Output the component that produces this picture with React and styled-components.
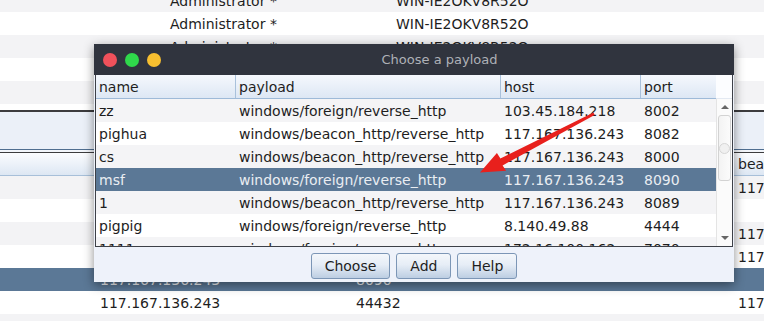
import styled, { createGlobalStyle } from "styled-components";

const GlobalStyle = createGlobalStyle`
  body {
    margin: 0;
    font-family: "DejaVu Sans", "Liberation Sans", sans-serif;
    font-size: 14px;
    color: #1e1e1e;
  }
`;

const Page = styled.div`
  position: relative;
  width: 764px;
  height: 321px;
  overflow: hidden;
  background: #ffffff;
`;

const SessionTable = styled.div`
  height: 121px;
  margin-top: -11px;
  overflow: hidden;
  border-bottom: 2px solid #3c3c3e;
`;

const SessionRow = styled.div`
  display: grid;
  grid-template-columns: 166px 226px 1fr;
  height: 23px;
  align-items: center;
  background: ${(p) => (p.$alt ? "#f3f3f5" : "#ffffff")};
`;

const Cell = styled.div`
  padding-left: 4px;
  white-space: nowrap;
  overflow: hidden;
  color: ${(p) => (p.$light ? "#f2f4f7" : "#1e1e1e")};
`;

const TabStrip = styled.div`
  height: 37px;
  background: #ebf0f8;
  border-bottom: 1px solid #4f6e90;
`;

const StripGap = styled.div`
  height: 2px;
  background: #f2f5fa;
  border-bottom: 1px solid #3c3c3e;
`;

const ListenerHeader = styled.div`
  display: grid;
  grid-template-columns: 96px 256px 382px 1fr;
  height: 22px;
  align-items: center;
  background: linear-gradient(#fbfcfe, #dde7f3);
  border-bottom: 1px solid #a7bfd9;
`;

const ListenerRow = styled.div`
  display: grid;
  grid-template-columns: 96px 256px 382px 1fr;
  height: 23px;
  align-items: center;
  background: ${(p) => (p.$selected ? "#5b7896" : p.$alt ? "#f3f3f5" : "#ffffff")};
`;

const Dialog = styled.div`
  position: absolute;
  left: 94px;
  top: 44px;
  width: 640px;
  height: 238px;
  display: flex;
  flex-direction: column;
  background: #eef2fa;
  box-shadow: 0 3px 10px rgba(0, 0, 0, 0.45);
`;

const TitleBar = styled.div`
  height: 31px;
  flex: none;
  display: flex;
  align-items: center;
  padding-left: 9px;
  background: #30343e;
`;

const Lights = styled.div`
  display: flex;
  gap: 8px;
`;

const Light = styled.span`
  width: 14px;
  height: 14px;
  border-radius: 50%;
  background: ${(p) => p.$color};
`;

const Title = styled.div`
  flex: 1;
  text-align: center;
  padding-right: 16px;
  font-size: 13px;
  color: #aeb1b7;
`;

const ScrollPane = styled.div`
  margin: 0 1px;
  border: 1px solid #3d4047;
  border-top: none;
  display: grid;
  grid-template-columns: 620px 16px;
  grid-template-rows: 24px 147px;
  background: #ffffff;
`;

const PayloadHeader = styled.div`
  display: grid;
  grid-template-columns: 140px 265px 140px 75px;
  background: linear-gradient(#f5f8fd, #dde7f4);
  border-bottom: 1px solid #9ebad8;
`;

const HeaderCell = styled.div`
  display: flex;
  align-items: center;
  padding-left: 3px;
  border-right: ${(p) => (p.$last ? "none" : "1px solid #a9c1db")};
  color: #1e1e1e;
`;

const Corner = styled.div`
  background: #fcfdff;
  border-bottom: 1px solid #e3e9f2;
`;

const Viewport = styled.div`
  overflow: hidden;
`;

const PayloadRow = styled.div`
  display: grid;
  grid-template-columns: 140px 265px 140px 75px;
  height: 23px;
  align-items: center;
  background: ${(p) => (p.$selected ? "#5b7896" : p.$alt ? "#f4f4f6" : "#ffffff")};
`;

const PayloadCell = styled.div`
  padding-left: 3px;
  white-space: nowrap;
  color: ${(p) => (p.$light ? "#e9edf2" : "#1e1e1e")};
`;

const ScrollBar = styled.div`
  display: flex;
  flex-direction: column;
  background: #fbfbfb;
  border-left: 1px solid #e4e4e4;
`;

const ScrollButton = styled.div`
  height: 16px;
  flex: none;
  display: flex;
  align-items: center;
  justify-content: center;
`;

const ArrowGlyph = styled.span`
  width: 0;
  height: 0;
  border-left: 4px solid transparent;
  border-right: 4px solid transparent;
  ${(p) =>
    p.$down
      ? "border-top: 4px solid #666;"
      : "border-bottom: 4px solid #666;"}
`;

const Track = styled.div`
  flex: 1;
  padding: 0 1px;
`;

const Thumb = styled.div`
  height: 64px;
  border: 1px solid #d3d3d3;
  border-radius: 3px;
  background: linear-gradient(90deg, #f3f3f3, #fbfbfb);
  display: flex;
  align-items: center;
  justify-content: center;
`;

const Grip = styled.span`
  width: 9px;
  height: 9px;
  border-radius: 50%;
  border: 1px solid #d6d6d6;
  background: #f0f0f0;
`;

const ButtonBar = styled.div`
  flex: 1;
  display: flex;
  justify-content: center;
  align-items: flex-start;
  gap: 6px;
  padding-top: 6px;
`;

const Button = styled.button`
  height: 26px;
  padding: 0 13px;
  font-family: "DejaVu Sans", "Liberation Sans", sans-serif;
  font-size: 14px;
  color: #1e1e1e;
  border: 1px solid #7c96b6;
  border-radius: 3px;
  background: linear-gradient(#f4f7fb 0%, #e6edf6 45%, #bdcee2 100%);
`;

const Annotation = styled.svg`
  position: absolute;
  left: 0;
  top: 0;
  pointer-events: none;
`;

const payloads = [
  ["zz", "windows/foreign/reverse_http", "103.45.184.218", "8002"],
  ["pighua", "windows/beacon_http/reverse_http", "117.167.136.243", "8082"],
  ["cs", "windows/beacon_http/reverse_http", "117.167.136.243", "8000"],
  ["msf", "windows/foreign/reverse_http", "117.167.136.243", "8090"],
  ["1", "windows/beacon_http/reverse_http", "117.167.136.243", "8089"],
  ["pigpig", "windows/foreign/reverse_http", "8.140.49.88", "4444"],
  ["1111", "windows/foreign/reverse_http", "172.16.100.162", "7070"],
];

const listeners = [
  ["", "", "", "117"],
  ["", "", "", ""],
  ["", "", "", "117"],
  ["", "", "", "117"],
  ["", "117.167.136.243", "8090", ""],
  ["", "117.167.136.243", "44432", "117"],
  ["", "", "", ""],
];

export default function App() {
  return (
    <Page>
      <GlobalStyle />
      <SessionTable>
        {[0, 1, 2, 3, 4, 5].map((i) => (
          <SessionRow key={i} $alt={i % 2 === 0}>
            <Cell />
            <Cell>Administrator *</Cell>
            <Cell>WIN-IE2OKV8R52O</Cell>
          </SessionRow>
        ))}
      </SessionTable>
      <TabStrip />
      <StripGap />
      <ListenerHeader>
        <Cell />
        <Cell>host</Cell>
        <Cell>port</Cell>
        <Cell>beacons</Cell>
      </ListenerHeader>
      {listeners.map((r, i) => (
        <ListenerRow key={i} $alt={i % 2 === 0} $selected={i === 4}>
          {r.map((c, j) => (
            <Cell key={j} $light={i === 4}>
              {c}
            </Cell>
          ))}
        </ListenerRow>
      ))}

      <Dialog>
        <TitleBar>
          <Lights>
            <Light $color="#f0515b" />
            <Light $color="#2fd84b" />
            <Light $color="#f7bf30" />
          </Lights>
          <Title>Choose a payload</Title>
        </TitleBar>
        <ScrollPane>
          <PayloadHeader>
            <HeaderCell>name</HeaderCell>
            <HeaderCell>payload</HeaderCell>
            <HeaderCell>host</HeaderCell>
            <HeaderCell $last>port</HeaderCell>
          </PayloadHeader>
          <Corner />
          <Viewport>
            {payloads.map((r, i) => (
              <PayloadRow key={i} $alt={i % 2 === 0} $selected={i === 3}>
                {r.map((c, j) => (
                  <PayloadCell key={j} $light={i === 3}>
                    {c}
                  </PayloadCell>
                ))}
              </PayloadRow>
            ))}
          </Viewport>
          <ScrollBar>
            <ScrollButton>
              <ArrowGlyph />
            </ScrollButton>
            <Track>
              <Thumb>
                <Grip />
              </Thumb>
            </Track>
            <ScrollButton>
              <ArrowGlyph $down />
            </ScrollButton>
          </ScrollBar>
        </ScrollPane>
        <ButtonBar>
          <Button>Choose</Button>
          <Button>Add</Button>
          <Button>Help</Button>
        </ButtonBar>
      </Dialog>

      <Annotation width="764" height="321" viewBox="0 0 764 321">
        <polygon
          points="593.5,112.6 500.4,158.4 496.9,153.0 480,172.5 506.1,170.8 502.6,165.4 594.6,115.0"
          fill="#e8201c"
        />
      </Annotation>
    </Page>
  );
}
